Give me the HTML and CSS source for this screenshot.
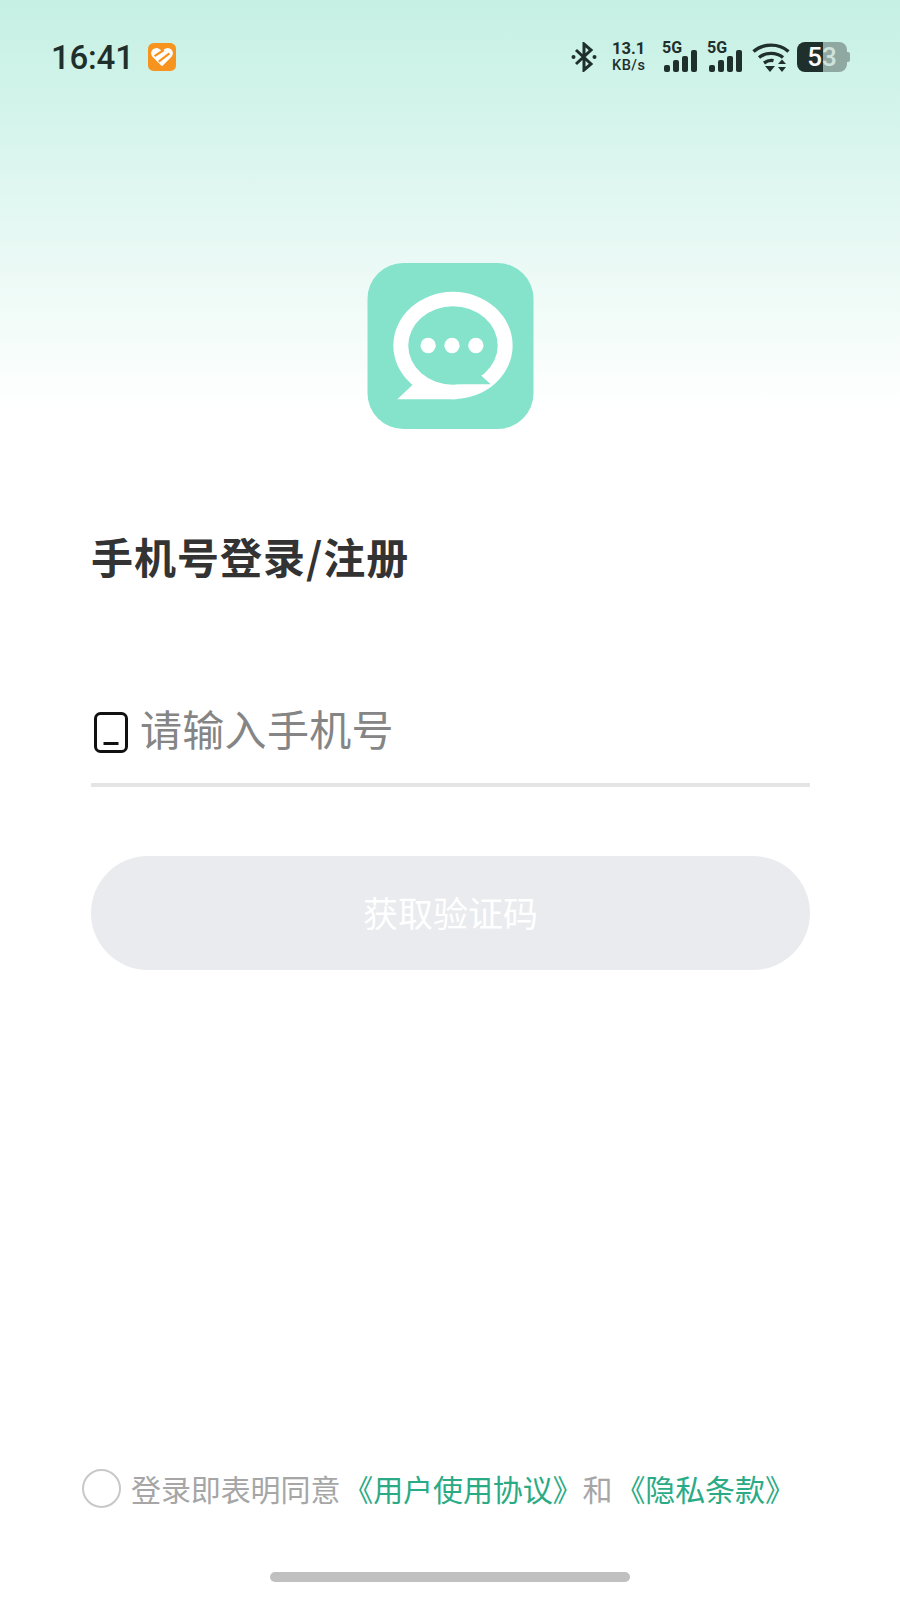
FILE: index.html
```html
<!DOCTYPE html>
<html lang="zh-CN">
<head>
  <meta charset="UTF-8" />
  <meta name="viewport" content="width=device-width, initial-scale=1.0"/>
  <title>手机号登录/注册</title>
  <link rel="stylesheet" href="styles.css">
</head>
<body>
  <div class="page">

    <header class="status-bar">
      <div class="status-left">
        <span class="time">16:41</span>
        <svg class="app-badge" viewBox="0 0 30 30">
          <rect width="30" height="30" rx="6" fill="#f7941f"/>
          <path d="M15 25 L5 15 a5.600 5.600 0 0 1 8-8 L15 9 l2-2 a5.600 5.600 0 0 1 8 8 z" fill="#fff"/>
          <path d="M7 14 L17 7.500 M11.500 20 L23 11" stroke="#f7941f" stroke-width="2.400"/>
        </svg>
      </div>
      <div class="status-right">
        <svg class="bt" viewBox="0 0 26 30" fill="none" stroke="#1f2f2c" stroke-width="3">
          <path d="M5 8 L20 22 L13 28 V2 L20 8 L5 22"/>
          <circle cx="2.500" cy="15" r="2" fill="#1f2f2c" stroke="none"/>
          <circle cx="23.500" cy="15" r="2" fill="#1f2f2c" stroke="none"/>
        </svg>
        <div class="speed"><span>13.1</span><span class="speed-unit">KB/s</span></div>
        <div class="signal">
          <span class="signal-label">5G</span>
          <div class="bars"><i class="b1"></i><i class="b2"></i><i class="b3"></i><i class="b4"></i></div>
        </div>
        <div class="signal">
          <span class="signal-label">5G</span>
          <div class="bars"><i class="b1"></i><i class="b2"></i><i class="b3"></i><i class="b4"></i></div>
        </div>
        <svg class="wifi" viewBox="0 0 38 30" fill="none" stroke="#1f2f2c" stroke-width="3.400">
          <path d="M1.500 9.500 C11 1 27 1 36.500 9.500"/>
          <path d="M7 15.500 C13.500 10 24.500 10 31 15.500"/>
          <path d="M12 21 C15.500 18.500 19 18 21.500 18.600"/>
          <path d="M13 24 H23 L18 30 Z M26 22 L30 17.500 L34 22 Z M26 25 H34 L30 30 Z" fill="#1f2f2c" stroke="none"/>
        </svg>
        <div class="battery"><span>5</span><span class="battery-dim">3</span></div>
      </div>
    </header>

    <main class="login">
      <svg class="logo" viewBox="0 0 167 167">
        <rect width="167" height="167" rx="36" fill="#85e3cb"/>
        <ellipse cx="86" cy="83" rx="60" ry="54" fill="#fff"/>
        <path d="M46 122 L30 137 H90 L70 118 Z" fill="#fff"/>
        <ellipse cx="86" cy="83" rx="45" ry="39.500" fill="#85e3cb"/>
        <path d="M114 113 L124 122 H92 Z" fill="#85e3cb"/>
        <circle cx="61" cy="83" r="7.700" fill="#fff"/>
        <circle cx="85" cy="83" r="7.700" fill="#fff"/>
        <circle cx="109" cy="83" r="7.700" fill="#fff"/>
      </svg>

      <h1 class="title">手机号登录/注册</h1>

      <div class="phone-field">
        <svg class="phone-icon" viewBox="0 0 34 41" fill="none" stroke="#111" stroke-width="3">
          <rect x="1.500" y="1.500" width="31" height="38" rx="5"/>
          <path d="M9.500 31.500 H24.500"/>
        </svg>
        <span class="placeholder">请输入手机号</span>
      </div>

      <button class="code-btn">获取验证码</button>
    </main>

    <footer class="agree">
      <span class="check"></span>
      <p class="agree-text">登录即表明同意<a class="link">《用户使用协议》</a>和<a class="link">《隐私条款》</a></p>
    </footer>

    <div class="home-bar"></div>
  </div>
</body>
</html>
```

FILE: styles.css
```css
* {
  box-sizing: border-box;
}

body {
  margin: 0;
  background: #fff;
  font-family: "Noto Sans CJK SC", "Noto Sans", sans-serif;
}

.page {
  width: 900px;
  height: 1600px;
  display: flex;
  flex-direction: column;
  background: linear-gradient(to bottom, #c6f0e4 0, #d3f4eb 110px, #e6f8f3 230px, #f7fdfb 355px, #fff 410px);
}

.status-bar {
  height: 72px;
  margin-top: 21px;
  padding: 0 50px 0 51px;
  display: flex;
  justify-content: space-between;
  align-items: center;
  color: #1f2f2c;
  font-family: Roboto, sans-serif;
}

.status-left {
  display: flex;
  align-items: center;
  gap: 14px;
  height: 32px;
}

.time {
  font-size: 33px;
  font-weight: 500;
  letter-spacing: -0.2px;
}

.app-badge {
  width: 28px;
  height: 28px;
}

.status-right {
  display: flex;
  align-items: center;
  height: 32px;
}

.bt {
  width: 26px;
  height: 30px;
  margin-right: 15px;
}

.speed {
  width: 50px;
  display: flex;
  flex-direction: column;
  align-items: flex-start;
  font-size: 16.500px;
  font-weight: 700;
  line-height: 17px;
}

.speed-unit {
  font-size: 14.500px;
  font-weight: 500;
  letter-spacing: 0.5px;
}

.signal {
  position: relative;
  width: 45px;
  height: 30px;
}

.signal-label {
  position: absolute;
  left: 0;
  top: -1px;
  font-size: 16px;
  font-weight: 700;
  line-height: 14px;
}

.bars {
  position: absolute;
  left: 2px;
  bottom: 0;
  display: flex;
  align-items: flex-end;
  gap: 3px;
}

.bars i {
  display: block;
  width: 6px;
  background: #1f2f2c;
  border-radius: 2px;
}

.b1 { height: 7px; }
.b2 { height: 12px; }
.b3 { height: 16px; }
.b4 { height: 22px; }

.wifi {
  width: 38px;
  height: 30px;
  margin-right: 7px;
}

.battery {
  position: relative;
  width: 50px;
  height: 30px;
  margin-right: 3px;
  border-radius: 8px;
  background: linear-gradient(to right, #1f2f2c 0, #1f2f2c 26px, #8fa9a2 26px);
  display: flex;
  justify-content: center;
  color: #fff;
  font-size: 26px;
  font-weight: 500;
  line-height: 30px;
}

.battery::after {
  content: "";
  position: absolute;
  right: -3px;
  top: 10px;
  width: 3px;
  height: 10px;
  border-radius: 0 2px 2px 0;
  background: #8fa9a2;
}

.battery-dim {
  color: #cfe3dd;
}

.login {
  padding: 0 90px 0 91px;
  display: flex;
  flex-direction: column;
}

.logo {
  width: 167px;
  height: 166px;
  margin-top: 170px;
  align-self: center;
}

.title {
  margin: 103px 0 0;
  font-size: 42px;
  line-height: 48px;
  font-weight: 700;
  letter-spacing: 1px;
  color: #333;
}

.phone-field {
  height: 84px;
  margin-top: 123px;
  padding: 9px 0 0 3px;
  display: flex;
  align-items: flex-start;
  gap: 12px;
  border-bottom: 4px solid #e5e5e5;
}

.phone-icon {
  width: 34px;
  height: 41px;
}

.placeholder {
  margin-top: -6px;
  font-size: 42px;
  line-height: 44px;
  letter-spacing: 0.3px;
  color: #858585;
}

.code-btn {
  height: 114px;
  margin-top: 69px;
  padding-bottom: 4px;
  border: none;
  border-radius: 57px;
  background: #e9ebee;
  color: #fff;
  font-family: inherit;
  font-size: 35px;
}

.agree {
  margin-top: auto;
  padding-left: 82px;
  display: flex;
  align-items: center;
  gap: 10px;
}

.check {
  width: 39px;
  height: 39px;
  border: 2px solid #c8c8c8;
  border-radius: 50%;
}

.agree-text {
  margin: 0;
  font-size: 30px;
  line-height: 40px;
  letter-spacing: -0.1px;
  color: #a6a6a6;
}

.link {
  margin-left: 3px;
  color: #2bab85;
}

.home-bar {
  width: 360px;
  height: 10px;
  margin: 64px auto 18px;
  border-radius: 5px;
  background: #c0c0c0;
}
```
